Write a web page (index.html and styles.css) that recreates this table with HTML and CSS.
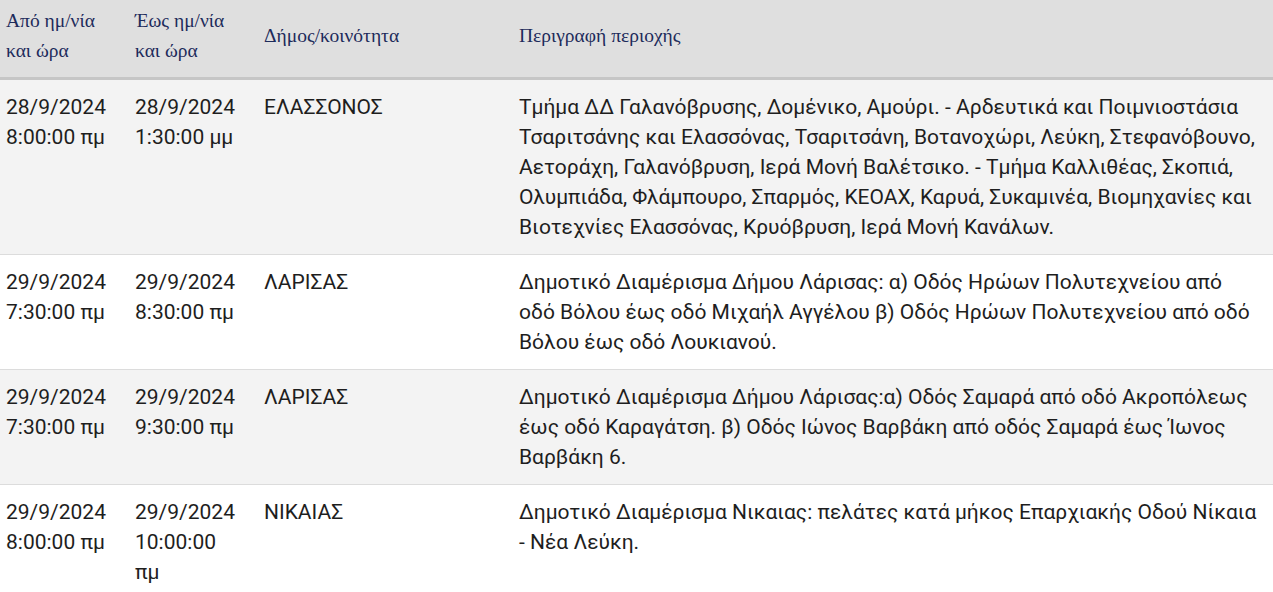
FILE: index.html
```html
<!DOCTYPE html>
<html lang="el">
<head>
<meta charset="utf-8">
<title>Διακοπές ρεύματος</title>
<link rel="stylesheet" href="styles.css">
</head>
<body>
<table class="outages">
  <colgroup>
    <col class="c-from">
    <col class="c-to">
    <col class="c-muni">
    <col class="c-desc">
  </colgroup>
  <thead>
    <tr>
      <th>Από ημ/νία και ώρα</th>
      <th>Έως ημ/νία και ώρα</th>
      <th>Δήμος/κοινότητα</th>
      <th>Περιγραφή περιοχής</th>
    </tr>
  </thead>
  <tbody>
    <tr>
      <td>28/9/2024 8:00:00 πμ</td>
      <td>28/9/2024 1:30:00 μμ</td>
      <td>ΕΛΑΣΣΟΝΟΣ</td>
      <td>Τμήμα ΔΔ Γαλανόβρυσης, Δομένικο, Αμούρι. - Αρδευτικά και Ποιμνιοστάσια Τσαριτσάνης και Ελασσόνας, Τσαριτσάνη, Βοτανοχώρι, Λεύκη, Στεφανόβουνο, Αετοράχη, Γαλανόβρυση, Ιερά Μονή Βαλέτσικο. - Τμήμα Καλλιθέας, Σκοπιά, Ολυμπιάδα, Φλάμπουρο, Σπαρμός, ΚΕΟΑΧ, Καρυά, Συκαμινέα, Βιομηχανίες και Βιοτεχνίες Ελασσόνας, Κρυόβρυση, Ιερά Μονή Κανάλων.</td>
    </tr>
    <tr>
      <td>29/9/2024 7:30:00 πμ</td>
      <td>29/9/2024 8:30:00 πμ</td>
      <td>ΛΑΡΙΣΑΣ</td>
      <td>Δημοτικό Διαμέρισμα Δήμου Λάρισας: α) Οδός Ηρώων Πολυτεχνείου από οδό Βόλου έως οδό Μιχαήλ Αγγέλου β) Οδός Ηρώων Πολυτεχνείου από οδό Βόλου έως οδό Λουκιανού.</td>
    </tr>
    <tr>
      <td>29/9/2024 7:30:00 πμ</td>
      <td>29/9/2024 9:30:00 πμ</td>
      <td>ΛΑΡΙΣΑΣ</td>
      <td>Δημοτικό Διαμέρισμα Δήμου Λάρισας:α) Οδός Σαμαρά από οδό Ακροπόλεως έως οδό Καραγάτση. β) Οδός Ιώνος Βαρβάκη από οδός Σαμαρά έως Ίωνος Βαρβάκη 6.</td>
    </tr>
    <tr>
      <td>29/9/2024 8:00:00 πμ</td>
      <td>29/9/2024 10:00:00 πμ</td>
      <td>ΝΙΚΑΙΑΣ</td>
      <td>Δημοτικό Διαμέρισμα Νικαιας: πελάτες κατά μήκος Επαρχιακής Οδού Νίκαια - Νέα Λεύκη.</td>
    </tr>
  </tbody>
</table>
</body>
</html>
```
FILE: styles.css
```css
html, body {
  margin: 0;
  padding: 0;
  background: #ffffff;
}

.outages {
  width: 100%;
  table-layout: fixed;
  border-collapse: collapse;
  font-family: Roboto, "Liberation Sans", sans-serif;
}

.c-from { width: 129px; }
.c-to { width: 129px; }
.c-muni { width: 255px; }
.c-desc { width: auto; }

.outages th {
  background: #dfdfdf;
  color: #1d2b5b;
  font-family: "Liberation Serif", "Times New Roman", serif;
  font-size: 19.5px;
  font-weight: normal;
  line-height: 30px;
  text-align: left;
  vertical-align: middle;
  padding: 6px 22px 11px 6px;
  border-bottom: 3px solid #c6c6c6;
}

.outages td {
  color: #1e1e1e;
  font-size: 21px;
  line-height: 30px;
  vertical-align: top;
  padding: 12px 22px 12px 6px;
  border-bottom: 1px solid #dcdcdc;
}

.outages td:last-child {
  padding-right: 15px;
}

.outages tbody tr:nth-child(odd) {
  background: #f3f3f3;
}

.outages tbody tr:nth-child(even) {
  background: #ffffff;
}
```
